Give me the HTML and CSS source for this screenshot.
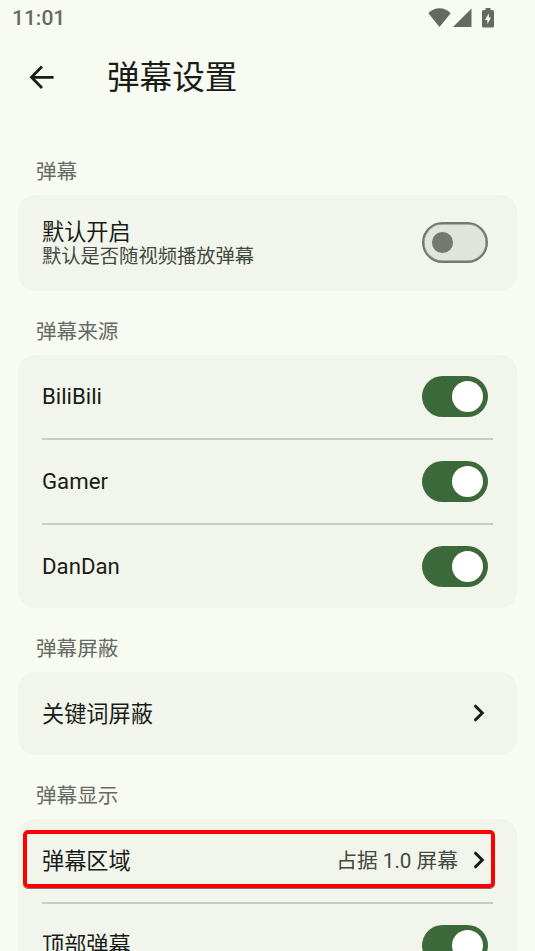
FILE: index.html
```
<!DOCTYPE html>
<html lang="zh-CN">
<head>
<meta charset="utf-8">
<title>弹幕设置</title>
<link rel="stylesheet" href="styles.css">
</head>
<body>
<div class="screen">
  <header class="status">
    <span class="clock">11:01</span>
    <div class="status-icons">
      <svg width="23" height="19" viewBox="0 0 23 19"><path d="M0.3 5.3C6.500-1.300 16.500-1.300 22.700 5.300L11.500 19Z"/></svg>
      <svg width="19" height="19" viewBox="0 0 19 19"><path d="M18.500 0.500V19H0Z"/></svg>
      <svg class="battery" width="12" height="20" viewBox="0 0 12 20"><path fill-rule="evenodd" d="M3.500 0H8.500V2H10.500Q12 2 12 3.500V18Q12 19.500 10.500 19.500H1.500Q0 19.500 0 18V3.500Q0 2 1.500 2H3.500ZM6.800 5.200L3 12H5.400V16.300L9 9.500H6.800Z"/></svg>
    </div>
  </header>
  <div class="appbar">
    <svg width="26" height="26" viewBox="0 0 26 26"><path d="M24.600 13.300H3M13 2.600L2.500 13.300L13 24"/></svg>
    <h1>弹幕设置</h1>
  </div>
  <main>
    <h2>弹幕</h2>
    <section class="card">
      <div class="row tall"><div><div class="label">默认开启</div><div class="desc">默认是否随视频播放弹幕</div></div><span class="switch off"></span></div>
    </section>
    <h2>弹幕来源</h2>
    <section class="card">
      <div class="row"><span class="label">BiliBili</span><span class="switch"></span></div>
      <div class="row"><span class="label">Gamer</span><span class="switch"></span></div>
      <div class="row"><span class="label">DanDan</span><span class="switch"></span></div>
    </section>
    <h2>弹幕屏蔽</h2>
    <section class="card">
      <div class="row nav"><span class="label">关键词屏蔽</span><svg class="chevron" width="12" height="18" viewBox="0 0 12 18"><path d="M2.500 2.200L9.300 9L2.500 15.800"/></svg></div>
    </section>
    <h2>弹幕显示</h2>
    <section class="card">
      <div class="row nav"><span class="label">弹幕区域</span><span class="value">占据 1.0 屏幕</span><svg class="chevron" width="12" height="18" viewBox="0 0 12 18"><path d="M2.500 2.200L9.300 9L2.500 15.800"/></svg><span class="highlight"></span></div>
      <div class="row"><span class="label">顶部弹幕</span><span class="switch"></span></div>
    </section>
  </main>
</div>
</body>
</html>
```
FILE: styles.css
```
* { box-sizing: border-box; }
body { margin: 0; background: #f8fbf2; color: #191d18; font-family: Roboto, "Noto Sans CJK SC", sans-serif; }
.screen { height: 951px; overflow: hidden; }
.status { height: 36px; padding: 0 41px 0 12px; display: flex; align-items: center; justify-content: space-between; color: #666963; }
.clock { font-size: 21px; font-weight: 500; }
.status-icons { display: flex; gap: 2px; fill: #666963; }
.battery { margin-left: 8px; }
.appbar { height: 82px; padding-left: 29px; display: flex; align-items: center; gap: 52px; }
.appbar svg { fill: none; stroke: #191d18; stroke-width: 2.800; }
h1 { margin: 0; padding-top: 2px; font-size: 32.600px; font-weight: 400; line-height: 40px; }
main { padding: 37px 18px 0; }
h2 { margin: 0; height: 40px; padding: 2px 18px 0; font-size: 20.600px; font-weight: 400; line-height: 31px; color: #666a63; }
.card { border-radius: 17px; background: #f2f5ec; margin-bottom: 24px; padding: 0 24px; }
.row { position: relative; height: 85px; display: flex; align-items: center; border-bottom: 2px solid #c6cdc1; }
.row:last-child { height: 83px; border: 0; }
.row.tall:last-child { height: 96px; }
.label { font-size: 22.200px; line-height: 25px; margin-right: auto; }
.nav .label, .nav .value { padding-top: 2px; }
.row > div { margin-right: auto; padding-top: 1px; }
.desc { font-size: 19.300px; line-height: 23px; color: #42493f; }
.switch { width: 66px; height: 40.500px; margin-right: 5px; border-radius: 21px; background: #3b693a; display: flex; align-items: center; justify-content: flex-end; padding: 5px; }
.switch::after { content: ""; width: 31px; height: 31px; border-radius: 50%; background: #fff; }
.switch.off { background: #e1e4db; border: 2px solid #72796f; box-shadow: inset 0 0 0 0.500px #72796f; justify-content: flex-start; padding: 0 8px; margin-bottom: 1px; }
.switch.off::after { width: 20.500px; height: 20.500px; background: #72796f; }
.chevron { margin: 0 8px 1px 0; fill: none; stroke: #191d18; stroke-width: 3; stroke-linecap: round; }
.value { margin-right: 15px; font-size: 20.700px; line-height: 25px; color: #42493f; }
.highlight { position: absolute; left: -19px; right: -2px; top: 11px; height: 58px; border: 4px solid #ff0000; border-radius: 5px; box-shadow: 0 1px 0 #72796f; }
```
